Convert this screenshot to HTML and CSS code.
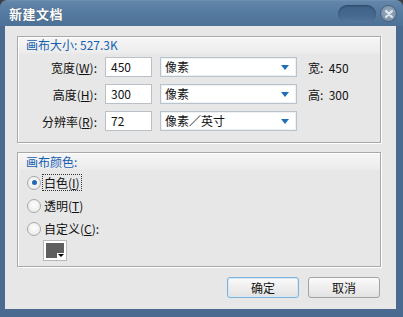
FILE: index.html
```html
<!DOCTYPE html>
<html lang="zh">
<head>
<meta charset="utf-8">
<title>新建文档</title>
<link rel="stylesheet" href="styles.css">
</head>
<body>
<div class="window">
  <div class="titlebar">
    <span class="title">新建文档</span>
    <span class="pill"></span>
    <span class="close"><svg width="10" height="10" viewBox="0 0 10 10"><path d="M2 2 L8 8 M8 2 L2 8" stroke="#dde5ee" stroke-width="2.2" stroke-linecap="round"/></svg></span>
  </div>
  <div class="client">
    <div class="group g1">
      <div class="gtitle">画布大小: 527.3K</div>
      <div class="row">
        <label class="lbl">宽度(<u>W</u>):</label>
        <div class="input">450</div>
        <div class="select"><span>像素</span><i class="arrow"></i></div>
        <span class="info">宽:&nbsp; 450</span>
      </div>
      <div class="row">
        <label class="lbl">高度(<u>H</u>):</label>
        <div class="input">300</div>
        <div class="select"><span>像素</span><i class="arrow"></i></div>
        <span class="info">高:&nbsp; 300</span>
      </div>
      <div class="row">
        <label class="lbl">分辨率(<u>R</u>):</label>
        <div class="input">72</div>
        <div class="select"><span>像素／英寸</span><i class="arrow"></i></div>
      </div>
    </div>
    <div class="group g2">
      <div class="gtitle">画布颜色:</div>
      <div class="radio"><span class="dot on"></span><span class="rl focus">白色(<u>I</u>)</span></div>
      <div class="radio"><span class="dot"></span><span class="rl">透明(<u>T</u>)</span></div>
      <div class="radio"><span class="dot"></span><span class="rl">自定义(<u>C</u>):</span></div>
      <div class="swatch"><i class="sw-arrow"></i></div>
    </div>
    <div class="buttons">
      <div class="btn default">确定</div>
      <div class="btn">取消</div>
    </div>
  </div>
</div>
</body>
</html>
```

FILE: styles.css
```css
* { box-sizing: border-box; }
html, body { margin: 0; padding: 0; }
body {
  background: #3a3f45;
  font-family: "Noto Sans CJK SC", "Liberation Sans", sans-serif;
  font-size: 12px;
  color: #111;
}
.window {
  width: 403px;
  height: 317px;
  display: flex;
  flex-direction: column;
  background: #4a6b8f;
  border-radius: 7px 7px 0 0;
  border-top: 1px solid #6f8fb0;
}
.titlebar {
  height: 25px;
  display: flex;
  align-items: center;
  padding: 0 6px 0 9px;
  background: linear-gradient(#6386ab, #557a9f 50%, #4d7196);
  border-radius: 7px 7px 0 0;
}
.title {
  color: #fff;
  font-weight: bold;
  font-size: 13px;
  letter-spacing: 0.5px;
  flex: 1;
  text-shadow: 0 0 1px rgba(0,0,0,0.4);
}
.pill {
  width: 38px;
  height: 18px;
  border-radius: 9px;
  background: linear-gradient(#3f6189, #46698f 60%, #5577a0);
  box-shadow: inset 0 1px 2px rgba(0,0,0,0.3);
  margin-right: 4px;
}
.close {
  width: 17px;
  height: 17px;
  border-radius: 50%;
  background: radial-gradient(circle at 50% 40%, #9aabbd, #6f869e);
  border: 1px solid #44617f;
  display: flex;
  align-items: center;
  justify-content: center;
}
.client {
  flex: 1;
  margin: 0 7px 8px 5px;
  background: #e7e7e7;
  padding: 10px 15px 0 12px;
  display: flex;
  flex-direction: column;
}
.group {
  border: 1px solid #a9a9a9;
  box-shadow: 1px 1px 0 #fff, inset 1px 1px 0 #fff;
  background: linear-gradient(#f6f6f6, #ececec 16px, #e7e7e7 17px);
  padding: 0 0 0 8px;
}
.g1 { height: 107px; }
.g2 { height: 115px; margin-top: 9px; }
.gtitle {
  color: #1660b0;
  line-height: 14px;
  padding-top: 1px;
  height: 16px;
}
.g2 .gtitle { padding-top: 2px; height: 18px; }
.row {
  display: flex;
  align-items: center;
  height: 20px;
  margin-left: -8px;
}
.g1 .gtitle + .row { margin-top: 4px; }
.row + .row { margin-top: 7px; }
.lbl {
  width: 79px;
  text-align: right;
}
.input {
  width: 47px;
  height: 20px;
  margin-left: 8px;
  background: #fff;
  border: 1px solid #b9c0c8;
  padding: 0 5px;
  line-height: 18px;
}
.select {
  width: 137px;
  height: 20px;
  margin-left: 8px;
  background: #fff;
  border: 1px solid #b9c3cd;
  box-shadow: inset 0 0 0 1px #eef1f4;
  display: flex;
  align-items: center;
  justify-content: space-between;
  padding: 0 6px 0 4px;
  line-height: 18px;
}
.arrow {
  width: 0;
  height: 0;
  border-left: 4px solid transparent;
  border-right: 4px solid transparent;
  border-top: 5px solid #1e6fb8;
  margin-right: 1px;
}
.info { margin-left: 11px; }
.radio {
  display: flex;
  align-items: center;
  height: 23px;
  margin-left: 1px;
}
.dot {
  width: 14px;
  height: 14px;
  border-radius: 50%;
  border: 1px solid #a8a8a8;
  background: radial-gradient(circle at 50% 40%, #fff, #e4e4e4);
  display: flex;
  align-items: center;
  justify-content: center;
}
.dot.on::after {
  content: "";
  width: 5px;
  height: 5px;
  border-radius: 50%;
  background: #2467b3;
}
.rl {
  margin-left: 1px;
  padding: 0 1px;
  line-height: 15px;
  border: 1px solid transparent;
}
.rl.focus { border: 1px dotted #333; }
.swatch {
  width: 24px;
  height: 21px;
  margin: 0 0 0 17px;
  border: 1px solid #b8b8b8;
  background: #5e5e5e;
  box-shadow: inset 0 0 0 2px #fff;
  position: relative;
}
.sw-arrow {
  position: absolute;
  right: 1px;
  bottom: 1px;
  width: 8px;
  height: 6px;
  background: #fff;
}
.sw-arrow::after {
  content: "";
  position: absolute;
  left: 1px;
  top: 1px;
  border-left: 3px solid transparent;
  border-right: 3px solid transparent;
  border-top: 3px solid #000;
}
.buttons {
  display: flex;
  justify-content: flex-end;
  gap: 9px;
  margin-top: 10px;
  padding-right: 1px;
}
.btn {
  width: 72px;
  height: 21px;
  border: 1px solid #a4a4a4;
  border-radius: 3px;
  background: linear-gradient(#fbfbfb, #ececec 60%, #e2e2e2);
  text-align: center;
  line-height: 19px;
}
.btn.default {
  border-color: #7fb3da;
  box-shadow: inset 0 0 0 1px #d6e8f5;
}
```
